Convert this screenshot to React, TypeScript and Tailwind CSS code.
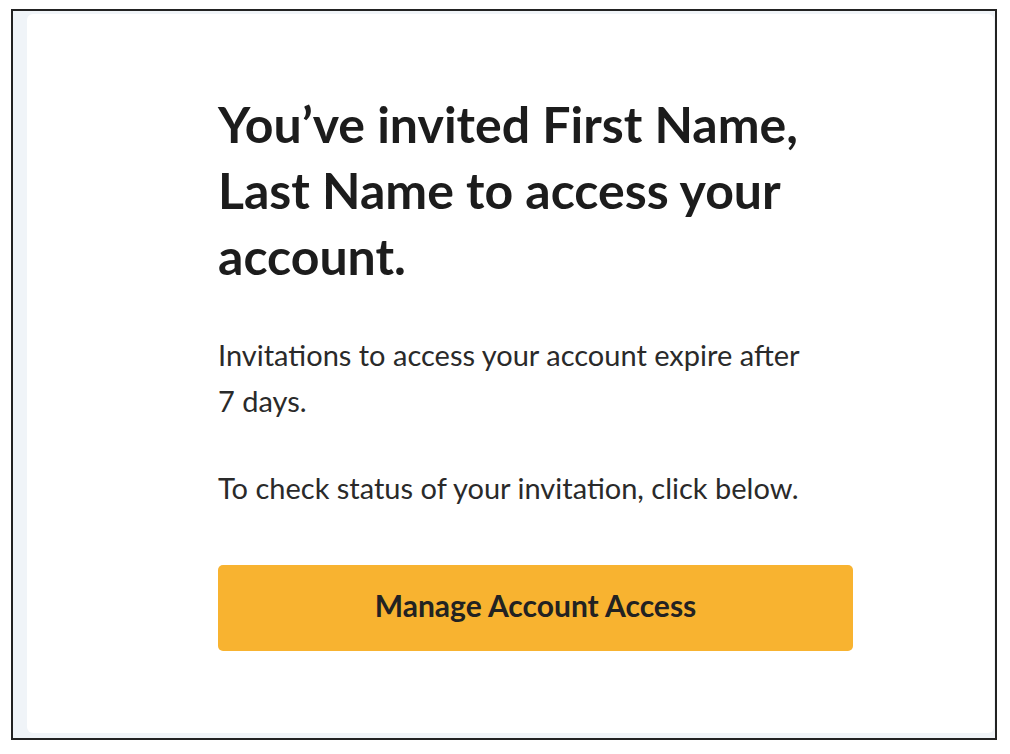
export default function App() {
  return (
    <div className="min-h-screen bg-white pl-[11px] pt-[9px]">
      <div className="box-border flex h-[731px] w-[986px] border-2 border-[#222] bg-[#f0f4f8] pb-[5px] pl-[14px] pr-[1px] pt-[3px]">
        <div className="flex-1 rounded-md bg-white pl-[191px] pt-[77px]">
          <h1 className="font-['Lato',sans-serif] text-[50px] font-bold leading-[66px] text-[#1c1c1c]">
            You’ve invited First Name,
            <br />
            Last Name to access your
            <br />
            account.
          </h1>
          <div className="mt-[43px] font-['Lato',sans-serif] text-[29px] leading-[46px] text-[#2a2a2a]">
            <p>
              Invitations to access your account expire after
              <br />7 days.
            </p>
            <p className="mt-[41px]">To check status of your invitation, click below.</p>
          </div>
          <button className="mt-[54px] flex h-[86px] w-[635px] items-center justify-center rounded-[5px] bg-[#f8b330] pb-[5px] font-['Lato',sans-serif] text-[30px] font-bold text-[#222]">
            Manage Account Access
          </button>
        </div>
      </div>
    </div>
  );
}
